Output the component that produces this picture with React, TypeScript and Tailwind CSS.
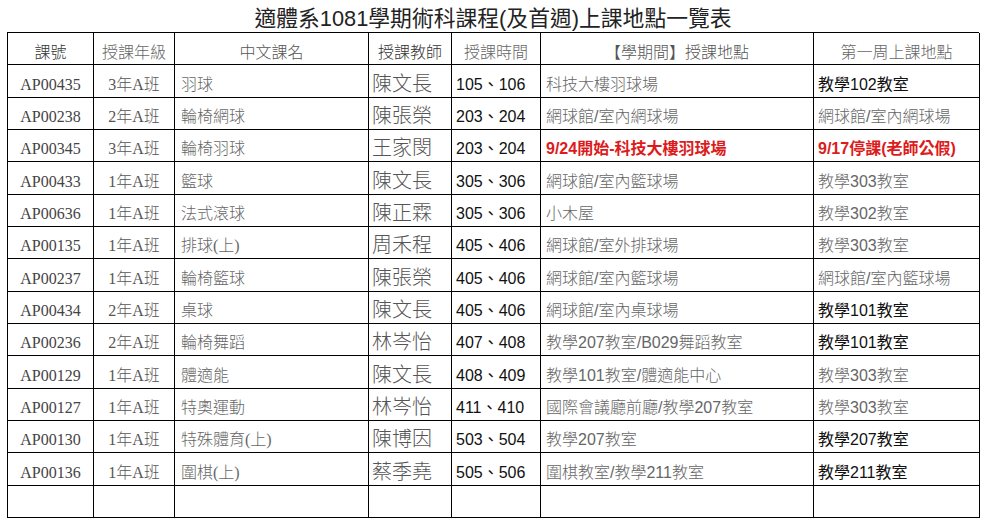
import React from "react";

type Row = {
  code: string;
  grade: string;
  name: string;
  teacher: string;
  time: string;
  place: string;
  first: string;
  placeRed?: boolean;
  firstRed?: boolean;
  firstDark?: boolean;
};

const rows: Row[] = [
  { code: "AP00435", grade: "3年A班", name: "羽球", teacher: "陳文長", time: "105、106", place: "科技大樓羽球場", first: "教學102教室", firstDark: true },
  { code: "AP00238", grade: "2年A班", name: "輪椅網球", teacher: "陳張榮", time: "203、204", place: "網球館/室內網球場", first: "網球館/室內網球場" },
  { code: "AP00345", grade: "3年A班", name: "輪椅羽球", teacher: "王家閔", time: "203、204", place: "9/24開始-科技大樓羽球場", first: "9/17停課(老師公假)", placeRed: true, firstRed: true },
  { code: "AP00433", grade: "1年A班", name: "籃球", teacher: "陳文長", time: "305、306", place: "網球館/室內籃球場", first: "教學303教室" },
  { code: "AP00636", grade: "1年A班", name: "法式滾球", teacher: "陳正霖", time: "305、306", place: "小木屋", first: "教學302教室" },
  { code: "AP00135", grade: "1年A班", name: "排球(上)", teacher: "周禾程", time: "405、406", place: "網球館/室外排球場", first: "教學303教室" },
  { code: "AP00237", grade: "1年A班", name: "輪椅籃球", teacher: "陳張榮", time: "405、406", place: "網球館/室內籃球場", first: "網球館/室內籃球場" },
  { code: "AP00434", grade: "2年A班", name: "桌球", teacher: "陳文長", time: "405、406", place: "網球館/室內桌球場", first: "教學101教室", firstDark: true },
  { code: "AP00236", grade: "2年A班", name: "輪椅舞蹈", teacher: "林岑怡", time: "407、408", place: "教學207教室/B029舞蹈教室", first: "教學101教室", firstDark: true },
  { code: "AP00129", grade: "1年A班", name: "體適能", teacher: "陳文長", time: "408、409", place: "教學101教室/體適能中心", first: "教學303教室" },
  { code: "AP00127", grade: "1年A班", name: "特奧運動", teacher: "林岑怡", time: "411、410", place: "國際會議廳前廳/教學207教室", first: "教學303教室" },
  { code: "AP00130", grade: "1年A班", name: "特殊體育(上)", teacher: "陳博因", time: "503、504", place: "教學207教室", first: "教學207教室", firstDark: true },
  { code: "AP00136", grade: "1年A班", name: "圍棋(上)", teacher: "蔡季堯", time: "505、506", place: "圍棋教室/教學211教室", first: "教學211教室", firstDark: true },
];

const sans = "font-['Liberation_Sans','Noto_Sans_CJK_TC',sans-serif]";
const serif = "font-['Liberation_Serif','Noto_Sans_CJK_TC',serif]";
const cell = "h-[32.33px] border-r border-b border-black flex items-end pb-[4px] leading-none overflow-hidden whitespace-nowrap";
const head = `${cell} !pb-[3px] justify-center text-[16px] font-light ${sans}`;

export default function App() {
  return (
    <div className="w-[987px] h-[526px] bg-white overflow-hidden">
      <div className="pl-[7px] w-[979px]">
        <div className={`h-[32px] flex items-end justify-center pb-[2px] text-[21.8px] leading-none text-[#222] ${sans}`}>
          適體系1081學期術科課程(及首週)上課地點一覽表
        </div>
        <div className="grid grid-cols-[86px_81px_194px_83px_89px_273px_166px] border-l border-t border-black">
          <div className={`${head} text-[#333]`}>課號</div>
          <div className={`${head} text-[#666]`}>授課年級</div>
          <div className={`${head} text-[#555]`}>中文課名</div>
          <div className={`${head} text-[#333]`}>授課教師</div>
          <div className={`${head} text-[#666]`}>授課時間</div>
          <div className={`${head} text-[#555]`}>【學期間】授課地點</div>
          <div className={`${head} text-[#666]`}>第一周上課地點</div>

          {rows.map((r) => (
            <React.Fragment key={r.code}>
              <div className={`${cell} justify-center text-[16px] text-[#444] ${serif}`}>{r.code}</div>
              <div className={`${cell} justify-center text-[16px] text-[#555] font-light ${serif}`}>{r.grade}</div>
              <div className={`${cell} pl-[6px] text-[16px] text-[#666] font-light ${serif}`}>{r.name}</div>
              <div className={`${cell} pl-[3px] !pb-[3px] text-[20px] text-[#555] font-light ${sans}`}>{r.teacher}</div>
              <div className={`${cell} pl-[4px] text-[16px] text-[#111] ${sans}`}>{r.time}</div>
              <div
                className={`${cell} pl-[5px] text-[16px] ${sans} ${
                  r.placeRed ? "text-[#dc1c1c] font-bold" : "text-[#666] font-light"
                }`}
              >
                {r.place}
              </div>
              <div
                className={`${cell} pl-[4px] text-[16px] ${sans} ${
                  r.firstRed ? "text-[#dc1c1c] font-bold" : r.firstDark ? "text-[#111]" : "text-[#666] font-light"
                }`}
              >
                {r.first}
              </div>
            </React.Fragment>
          ))}

          {[0, 1, 2, 3, 4, 5, 6].map((i) => (
            <div key={i} className={cell} />
          ))}
        </div>
      </div>
    </div>
  );
}
